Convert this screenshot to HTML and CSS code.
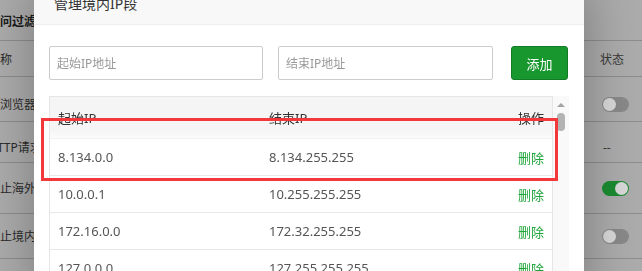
FILE: index.html
```html
<!DOCTYPE html>
<html>

	<head>
		<meta charset="UTF-8">
		<title>管理境内IP段</title>
		<link rel="stylesheet" href="styles.css">
	</head>

	<body>
		<!-- 背景页面 -->
		<div class="page">
			<div class="page-head">
				<span class="page-title">访问过滤</span>
			</div>
			<div class="rule-row head">
				<span class="rule-name">名称</span>
				<span class="rule-state">状态</span>
			</div>
			<div class="rule-row r1">
				<span class="rule-name">非浏览器访问</span>
				<span class="rule-state"><i class="switch"></i></span>
			</div>
			<div class="rule-row r2">
				<span class="rule-name">HTTP请求过滤</span>
				<span class="rule-state dash">--</span>
			</div>
			<div class="rule-row r3">
				<span class="rule-name">禁止海外访问</span>
				<span class="rule-state"><i class="switch on"></i></span>
			</div>
			<div class="rule-row r4">
				<span class="rule-name">禁止境内访问</span>
				<span class="rule-state"><i class="switch"></i></span>
			</div>
			<div class="rule-row r5">
				<span class="rule-name">禁止扫描器</span>
				<span class="rule-state"><i class="switch"></i></span>
			</div>
		</div>

		<div class="shade"></div>

		<!-- 弹出层 -->
		<div class="layer">
			<div class="layer-title">管理境内IP段</div>
			<div class="layer-body">
				<div class="ip-form">
					<input type="text" class="ip-input start" placeholder="起始IP地址">
					<input type="text" class="ip-input end" placeholder="结束IP地址">
					<button class="btn-add">添加</button>
				</div>
				<div class="ip-list">
					<div class="ip-table">
						<table>
							<thead>
								<tr>
									<th class="c-start">起始IP</th>
									<th class="c-end">结束IP</th>
									<th class="c-op">操作</th>
								</tr>
							</thead>
							<tbody>
								<tr>
									<td>8.134.0.0</td>
									<td>8.134.255.255</td>
									<td class="c-op"><a class="del">删除</a></td>
								</tr>
								<tr>
									<td>10.0.0.1</td>
									<td>10.255.255.255</td>
									<td class="c-op"><a class="del">删除</a></td>
								</tr>
								<tr>
									<td>172.16.0.0</td>
									<td>172.32.255.255</td>
									<td class="c-op"><a class="del">删除</a></td>
								</tr>
								<tr>
									<td>127.0.0.0</td>
									<td>127.255.255.255</td>
									<td class="c-op"><a class="del">删除</a></td>
								</tr>
							</tbody>
						</table>
					</div>
					<div class="scrollbar">
						<i class="arrow"></i>
						<i class="thumb"></i>
					</div>
				</div>
				<!-- 标注框 -->
				<div class="mark"></div>
			</div>
		</div>
	</body>

</html>
```

FILE: styles.css
```css
* {
	margin: 0;
	padding: 0;
	box-sizing: border-box;
}

body {
	height: 271px;
	overflow: hidden;
	font: 12px "Noto Sans", "Noto Sans CJK SC", sans-serif;
	color: #333;
	background-color: #cacaca;
}

/* 背景页面 */
.page-head {
	height: 41px;
	padding-top: 14px;
	border-bottom: 1px solid #a6a6a6;
}

.page-title {
	display: block;
	margin-left: -12px;
	line-height: 16px;
	font-weight: bold;
	color: #222;
}

.rule-row {
	display: flex;
	align-items: center;
	border-bottom: 1px solid #a6a6a6;
	white-space: nowrap;
}

.rule-row.head {
	height: 36px;
}

.rule-row.r1 {
	height: 45px;
	padding-top: 10px;
}

.rule-row.r2 {
	height: 41px;
	padding-top: 10px;
}

.rule-row.r3 {
	height: 51px;
}

.rule-row.r4,
.rule-row.r5 {
	height: 45px;
}

.rule-name {
	flex: 1;
	margin-left: -12px;
	color: #333;
}

.rule-state {
	width: 42px;
	color: #444;
}

.rule-state.dash {
	padding-left: 3px;
}

.switch {
	display: flex;
	width: 27px;
	height: 15px;
	margin-left: 2px;
	padding: 1px;
	border-radius: 8px;
	background-color: #a2a2a2;
}

.switch::after {
	content: "";
	width: 13px;
	height: 13px;
	border-radius: 50%;
	background-color: #fff;
}

.switch.on {
	justify-content: flex-end;
	background-color: #20a53a;
}

.shade {
	position: fixed;
	top: 0;
	left: 0;
	right: 0;
	bottom: 0;
	background-color: rgba(0, 0, 0, .15);
}

/* 弹出层 */
.layer {
	position: absolute;
	left: 34px;
	top: -17px;
	width: 550px;
	height: 320px;
	background-color: #fff;
	box-shadow: 1px 1px 50px rgba(0, 0, 0, .3);
}

.layer-title {
	height: 42px;
	line-height: 42px;
	padding-left: 20px;
	font-size: 14px;
	color: #333;
	background-color: #f8f8f8;
	border-bottom: 1px solid #eee;
}

.layer-body {
	position: relative;
	padding: 21px 15px 0;
}

.ip-form {
	display: flex;
	height: 34px;
}

.ip-input {
	height: 34px;
	padding: 0 7px;
	border: 1px solid #ccc;
	border-radius: 2px;
	font: 12px "Noto Sans", "Noto Sans CJK SC", sans-serif;
	color: #555;
	outline: none;
}

.ip-input::placeholder {
	color: #999;
}

.ip-input.start {
	width: 214px;
}

.ip-input.end {
	width: 215px;
	margin-left: 15px;
}

.btn-add {
	width: 57px;
	height: 34px;
	margin-left: 18px;
	border: 1px solid #137a26;
	border-radius: 3px;
	background-color: #19972f;
	color: #fff;
	font: 13px "Noto Sans", "Noto Sans CJK SC", sans-serif;
}

.ip-list {
	display: flex;
	margin-top: 16px;
}

.ip-table {
	width: 504px;
	border: 1px solid #e6e6e6;
	border-bottom: none;
}

table {
	width: 100%;
	border-collapse: separate;
	border-spacing: 0;
	table-layout: fixed;
}

th {
	height: 42px;
	padding: 0 8px;
	text-align: left;
	font-weight: normal;
	font-size: 13px;
	color: #333;
	background: linear-gradient(#f5f5f5 33px, #fbfbfb);
	border-bottom: 1px solid #f2f2f2;
}

th.c-start {
	width: 211px;
}

th.c-end {
	width: 209px;
}

td {
	height: 37px;
	padding: 0 8px;
	font-size: 13px;
	color: #555;
	border-bottom: 1px solid #e8e8e8;
}

.c-op {
	text-align: right;
}

.del {
	color: #20a53a;
}

/* 滚动条 */
.scrollbar {
	width: 16px;
	height: 200px;
	display: flex;
	flex-direction: column;
	align-items: center;
	background-color: #f9f9f9;
}

.arrow {
	margin-top: 7px;
	border-left: 4px solid transparent;
	border-right: 4px solid transparent;
	border-bottom: 4px solid #a3a3a3;
}

.thumb {
	width: 8px;
	height: 18px;
	margin-top: 6px;
	border-radius: 4px;
	background-color: #b3b3b3;
}

.mark {
	position: absolute;
	left: 7px;
	top: 93px;
	width: 517px;
	height: 63px;
	border: 3px solid #f2383a;
}
```
